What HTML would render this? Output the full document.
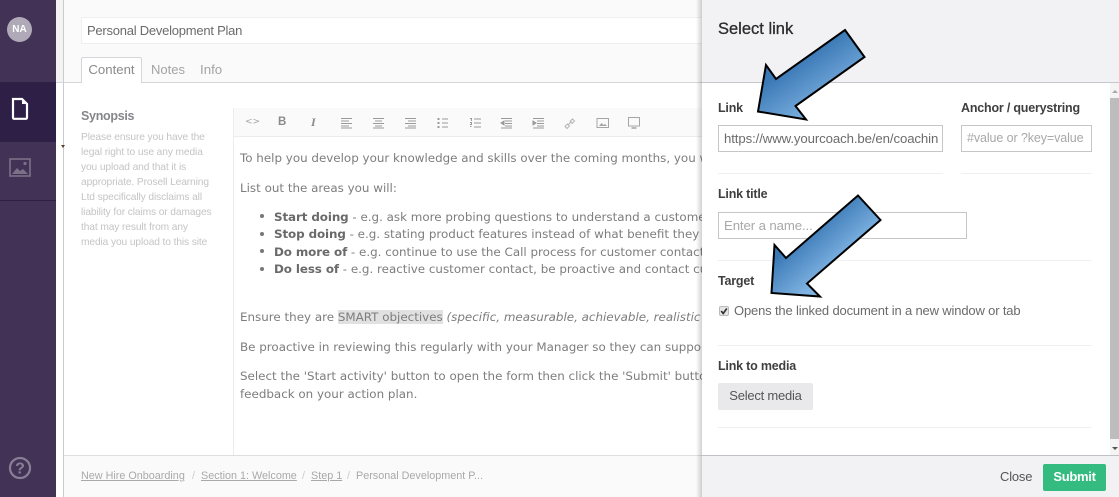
<!DOCTYPE html>
<html lang="en"><head><meta charset="utf-8"><title>Select link</title>
<style>
html,body{margin:0;padding:0;width:1119px;height:497px;overflow:hidden;background:#fff}
body{position:relative;font-family:"Liberation Sans",sans-serif;color:#555}
.a{position:absolute;white-space:nowrap}
.v{font-family:"DejaVu Sans",sans-serif;font-size:11.9px;color:#7d7d7d;line-height:18px}
.v b{color:#6a6a6a;letter-spacing:-.1px}
.l{font-size:12.5px;font-weight:bold;color:#3f3f3f;line-height:16px;letter-spacing:-.2px}
.s{font-size:10.2px;color:#c4c4c4;line-height:15px;left:81px;letter-spacing:-.1px}
.inp{position:absolute;box-sizing:border-box;border:1px solid #c6c6c6;background:#fff;height:27px;line-height:25px;padding-left:5px;font-size:13.2px;letter-spacing:-.1px;white-space:nowrap;overflow:hidden}
.hr{position:absolute;height:1px;background:#f0f0f2}
.bc{font-size:10.8px;color:#a9a9a9;line-height:14px;top:469px}
.bc u{color:#a9a9a9}
</style></head><body>
<!-- sidebar -->
<div class="a" style="left:0;top:0;width:56px;height:497px;background:#413256"></div>
<div class="a" style="left:0;top:82px;width:56px;height:60px;background:#2d1f45"></div>
<div class="a" style="left:0;top:200px;width:56px;height:1px;background:#2d1f45"></div>
<div class="a" style="left:7px;top:17px;width:25px;height:25px;border-radius:50%;background:#b0aab8;color:#fff;font-size:10px;font-weight:bold;line-height:26px;text-align:center">NA</div>
<svg class="a" style="left:11px;top:97px" width="18" height="24" viewBox="0 0 18 24"><path d="M2 2H11L16 7V20.800a1 1 0 0 1-1 1H3a1 1 0 0 1-1-1Z" fill="#2d1f45" stroke="#fff" stroke-width="2.200"/><path d="M11 2V7H16Z" fill="#fff"/></svg>
<svg class="a" style="left:9px;top:158px" width="22" height="20" viewBox="0 0 22 20"><rect x="1" y="1" width="20" height="17" fill="none" stroke="#7c7089" stroke-width="1.600"/><path d="M3 16L8 10L11 13L14 11L19 16Z" fill="#7c7089"/><circle cx="16" cy="5.500" r="1.600" fill="#7c7089"/></svg>
<svg class="a" style="left:8px;top:456px" width="24" height="24" viewBox="0 0 24 24"><circle cx="12" cy="12" r="10" fill="none" stroke="#8a7f96" stroke-width="2.200"/><text x="12" y="17.500" text-anchor="middle" font-family="Liberation Sans" font-weight="bold" font-size="16" fill="#8a7f96">?</text></svg>
<!-- left strip -->
<div class="a" style="left:56px;top:0;width:7px;height:497px;background:#f3f3f3"></div>
<div class="a" style="left:56px;top:82px;width:7px;height:415px;background:#fff"></div>
<div class="a" style="left:63px;top:0;width:1px;height:497px;background:#c9c9cf"></div>
<div class="a" style="left:61px;top:145px;width:0;height:0;border-left:2px solid transparent;border-right:2px solid transparent;border-top:3px solid #5a4020"></div>
<!-- header -->
<div class="a" style="left:64px;top:0;width:640px;height:82px;background:#fafafa"></div>
<div class="a" style="left:81px;top:17px;width:640px;height:27px;box-sizing:border-box;background:#fff;border:1px solid #efefef;padding-left:5px;font-size:13px;letter-spacing:-.24px;line-height:25px;color:#6b6b6b">Personal Development Plan</div>
<div class="a" style="left:56px;top:82px;width:650px;height:1px;background:#d6d6da"></div>
<div class="a" style="left:81px;top:57px;width:61px;height:26px;box-sizing:border-box;background:#fff;border:1px solid #d6d6da;border-bottom:0;border-radius:2px 2px 0 0;text-align:center;font-size:13.200px;line-height:24px;color:#8a8a8a">Content</div>
<div class="a" style="left:151px;top:62px;font-size:13px;line-height:15px;color:#a3a3a3">Notes</div>
<div class="a" style="left:200px;top:62px;font-size:13.300px;line-height:15px;color:#a3a3a3">Info</div>
<!-- synopsis -->
<div class="a" style="left:81px;top:108px;font-size:12.500px;letter-spacing:-.3px;font-weight:bold;line-height:16px;color:#85858c">Synopsis</div>
<div class="a s" style="top:130px">Please ensure you have the</div>
<div class="a s" style="top:145px">legal right to use any media</div>
<div class="a s" style="top:160px">you upload and that it is</div>
<div class="a s" style="top:175px">appropriate. Prosell Learning</div>
<div class="a s" style="top:190px">Ltd specifically disclaims all</div>
<div class="a s" style="top:205px">liability for claims or damages</div>
<div class="a s" style="top:220px">that may result from any</div>
<div class="a s" style="top:235px">media you upload to this site</div>
<!-- editor -->
<div class="a" style="left:233px;top:108px;width:470px;height:348px;border-left:1px solid #ececec"></div>
<div class="a" style="left:234px;top:108px;width:470px;height:28px;background:#fafafa;border-bottom:1px solid #ececec"></div>
<div class="a" style="left:245px;top:115px;font:9px/14px 'DejaVu Sans',sans-serif;color:#a5a5a5">&lt;&gt;</div>
<div class="a" style="left:278px;top:115px;font:bold 11.500px/15px 'Liberation Sans',sans-serif;color:#8a8a8a">B</div>
<div class="a" style="left:311px;top:115px;font:italic bold 12px/15px 'Liberation Serif',serif;color:#8a8a8a">I</div>
<svg class="a" style="left:340px;top:116px" width="300" height="14" viewBox="0 0 300 14" fill="none" stroke="#9a9a9a" stroke-width="1">
<path d="M1 2.500H12M1 5H9M1 7.500H12M1 10H9M1 12H12"/>
<path d="M33 2.500H44M35 5H42M33 7.500H44M35 10H42M33 12H44"/>
<path d="M65 2.500H76M68 5H76M65 7.500H76M68 10H76M65 12H76"/>
<path d="M102 3H108M102 7H108M102 11H108" /><path d="M97.500 3H99.500M97.500 7H99.500M97.500 11H99.500" stroke-width="2"/>
<path d="M134 3H141M134 7H141M134 11H141M130 2.500H131.500V5M130 6.500H131.500V8.500H130M130 10.500H131.500"/>
<path d="M161 2.500H172M165 5H172M165 7.500H172M165 10H172M161 12H172"/><path d="M164 5L161 7L164 9Z" fill="#9a9a9a"/>
<path d="M193 2.500H204M197 5H204M197 7.500H204M197 10H204M193 12H204"/><path d="M193 5L196 7L193 9Z" fill="#9a9a9a"/>
<path d="M225 10.500L227.500 8L229.500 10L227 12.500ZM230 5.500L232.500 3L234.500 5L232 7.500ZM228.500 8.500L231.500 5.500" stroke="#b5b5b5"/>
<rect x="257" y="2.500" width="11.500" height="9" stroke="#a5a5a5"/><path d="M259 10L261.500 7L263.500 9L265 8L267 10Z" fill="#a5a5a5" stroke="none"/>
<rect x="288.500" y="1.500" width="11" height="8.500" stroke="#a5a5a5"/><path d="M291.500 12H296.500" stroke="#a5a5a5" stroke-width="1.500"/>
</svg>
<!-- content -->
<div style="position:absolute;left:0;top:0;width:702px;height:497px;overflow:hidden">
<div class="a v" style="left:240px;top:149px">To help you develop your knowledge and skills over the coming months, you will need to</div>
<div class="a v" style="left:240px;top:179px">List out the areas you will:</div>
<div class="a" style="left:260px;top:214px;width:4px;height:4px;border-radius:50%;background:#777"></div>
<div class="a" style="left:260px;top:232px;width:4px;height:4px;border-radius:50%;background:#777"></div>
<div class="a" style="left:260px;top:249px;width:4px;height:4px;border-radius:50%;background:#777"></div>
<div class="a" style="left:260px;top:267px;width:4px;height:4px;border-radius:50%;background:#777"></div>
<div class="a v" style="left:274px;top:208px"><b>Start doing</b> - e.g. ask more probing questions to understand a customer's needs</div>
<div class="a v" style="left:274px;top:225px"><b>Stop doing</b> - e.g. stating product features instead of what benefit they bring</div>
<div class="a v" style="left:274px;top:243px"><b>Do more of</b> - e.g. continue to use the Call process for customer contact</div>
<div class="a v" style="left:274px;top:260px"><b>Do less of</b> - e.g. reactive customer contact, be proactive and contact customers</div>
<div class="a v" style="left:240px;top:308px">Ensure they are <span style="background:#e1e1e1">SMART objectives</span> <i>(specific, measurable, achievable, realistic and timely)</i></div>
<div class="a v" style="left:240px;top:338px">Be proactive in reviewing this regularly with your Manager so they can support you</div>
<div class="a v" style="left:240px;top:367px">Select the 'Start activity' button to open the form then click the 'Submit' button to get</div>
<div class="a v" style="left:240px;top:385px">feedback on your action plan.</div>
</div>
<!-- breadcrumb -->
<div class="a" style="left:64px;top:455px;width:640px;height:42px;background:#fafafa;border-top:1px solid #dedede"></div>
<div class="a bc" style="left:81px"><u>New Hire Onboarding</u></div>
<div class="a bc" style="left:192px;color:#ccc">/</div>
<div class="a bc" style="left:201px"><u>Section 1: Welcome</u></div>
<div class="a bc" style="left:302px;color:#ccc">/</div>
<div class="a bc" style="left:311px"><u>Step 1</u></div>
<div class="a bc" style="left:347px;color:#ccc">/</div>
<div class="a bc" style="left:356px">Personal Development P...</div>
<!-- panel -->
<div class="a" style="left:696px;top:0;width:6px;height:497px;background:linear-gradient(90deg,rgba(0,0,0,0),rgba(0,0,0,.18))"></div>
<div class="a" style="left:702px;top:0;width:417px;height:497px;background:#fff"></div>
<div class="a" style="left:702px;top:0;width:417px;box-sizing:border-box;height:83px;background:#f2f2f5;border-bottom:1px solid #c6c6cc"></div>
<div class="a" style="left:718px;top:19px;font-size:16.500px;line-height:20px;color:#2c2c2c;-webkit-text-stroke:.3px #2c2c2c">Select link</div>
<div class="a l" style="left:718px;top:100px">Link</div>
<div class="a l" style="left:961px;top:100px">Anchor / querystring</div>
<div class="inp" style="left:718px;top:125px;width:225px;color:#6b6b6b">https://www.yourcoach.be/en/coachin</div>
<div class="inp" style="left:961px;top:125px;width:131px;color:#a8a8a8;font-size:12.500px">#value or ?key=value</div>
<div class="hr" style="left:718px;top:173px;width:225px"></div>
<div class="hr" style="left:961px;top:173px;width:131px"></div>
<div class="a l" style="left:718px;top:186px">Link title</div>
<div class="inp" style="left:718px;top:212px;width:249px;color:#a8a8a8">Enter a name...</div>
<div class="hr" style="left:718px;top:260px;width:374px"></div>
<div class="a l" style="left:718px;top:273px">Target</div>
<div class="a" style="left:719px;top:306px;width:10px;height:10px;box-sizing:border-box;background:#e6e6e6;border:1px solid #bbb;border-radius:2px"></div>
<svg class="a" style="left:719px;top:306px" width="10" height="10" viewBox="0 0 10 10"><path d="M2.200 5L4.200 7.500L7.800 2.500" fill="none" stroke="#333" stroke-width="1.700"/></svg>
<div class="a" style="left:734px;top:303px;font-size:13px;letter-spacing:-.16px;line-height:15px;color:#6b6b6b">Opens the linked document in a new window or tab</div>
<div class="hr" style="left:718px;top:345px;width:374px"></div>
<div class="a l" style="left:718px;top:358px">Link to media</div>
<div class="a" style="left:718px;top:383px;width:95px;height:27px;background:#e9e9eb;border-radius:2px;text-align:center;font-size:13px;letter-spacing:-.23px;line-height:26px;color:#555">Select media</div>
<div class="hr" style="left:718px;top:427px;width:374px"></div>
<!-- scrollbar -->
<div class="a" style="left:1110px;top:83px;width:9px;height:372px;background:#f4f4f4"></div>
<div class="a" style="left:1110px;top:98px;width:9px;height:341px;background:#bdbdbd"></div>
<div class="a" style="left:1112px;top:90px;width:0;height:0;border-left:3px solid transparent;border-right:3px solid transparent;border-bottom:3px solid #a8a8a8"></div>
<div class="a" style="left:1112px;top:447px;width:0;height:0;border-left:3px solid transparent;border-right:3px solid transparent;border-top:3px solid #555"></div>
<!-- footer -->
<div class="a" style="left:702px;top:455px;width:417px;height:42px;box-sizing:border-box;background:#f2f2f5;border-top:1px solid #c0c0c6"></div>
<div class="a" style="left:1000px;top:469px;font-size:13px;letter-spacing:-.2px;line-height:15px;color:#555">Close</div>
<div class="a" style="left:1043px;top:464px;width:63px;height:27px;background:#34bb7f;border-radius:2px;text-align:center;color:#fff;font-size:13px;letter-spacing:-.3px;font-weight:bold;line-height:26px">Submit</div>
<!-- arrows -->
<svg class="a" style="left:0;top:0" width="1119" height="497" viewBox="0 0 1119 497">
<defs>
<linearGradient id="g1" gradientUnits="userSpaceOnUse" x1="800" y1="60" x2="830" y2="105"><stop offset="0" stop-color="#3b79b6"/><stop offset="1" stop-color="#7fb3e2"/></linearGradient>
<linearGradient id="g2" gradientUnits="userSpaceOnUse" x1="810" y1="228" x2="840" y2="262"><stop offset="0" stop-color="#3b79b6"/><stop offset="1" stop-color="#7fb3e2"/></linearGradient>
</defs>
<path d="M845 30L864.500 57L795.500 106L806 119.500L758 111.500L766 65L776 79Z" fill="url(#g1)" stroke="#000" stroke-width="2"/>
<path d="M858 195.500L880.500 220L807 283.500L820 296.500L771.500 293L774.500 245L786 258Z" fill="url(#g2)" stroke="#000" stroke-width="2"/>
</svg>
</body></html>
